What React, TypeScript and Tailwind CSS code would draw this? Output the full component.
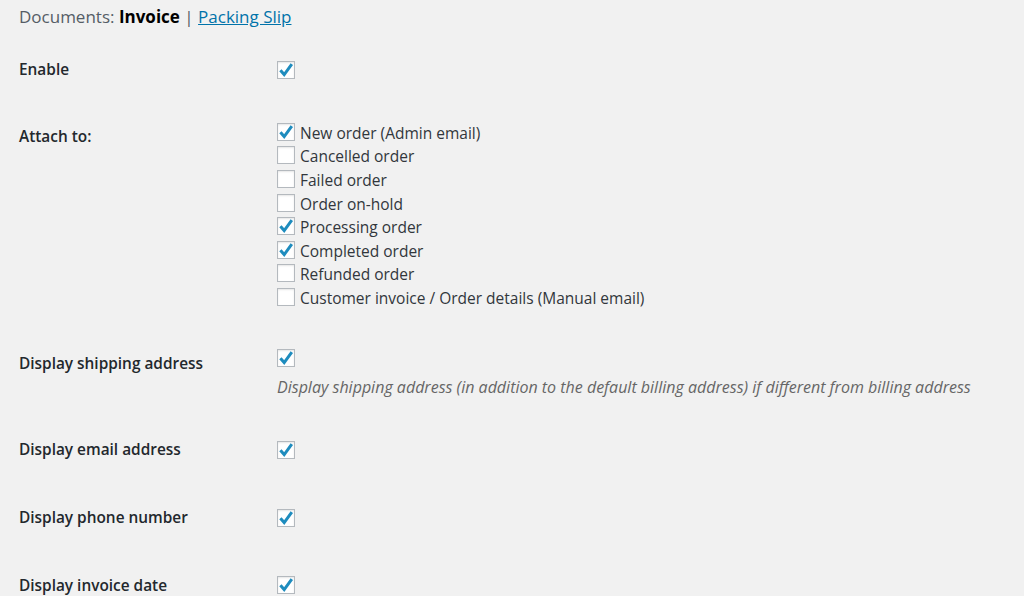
import React from "react";

const Check = ({ checked }: { checked: boolean }) => (
  <span className="relative block w-[18px] h-[18px] bg-white border border-[#b4b9be] shadow-[inset_0_1px_2px_rgba(0,0,0,0.1)] shrink-0">
    {checked && (
      <svg className="absolute left-[-1px] top-[-1px]" width="18" height="18" viewBox="0 0 18 18">
        <path d="M3.4 9.2 L7.2 13.6 L14.8 3.2" fill="none" stroke="#1e8cbe" strokeWidth="3" strokeLinecap="butt" strokeLinejoin="miter" />
      </svg>
    )}
  </span>
);

const items: [string, boolean][] = [
  ["New order (Admin email)", true],
  ["Cancelled order", false],
  ["Failed order", false],
  ["Order on-hold", false],
  ["Processing order", true],
  ["Completed order", true],
  ["Refunded order", false],
  ["Customer invoice / Order details (Manual email)", false],
];

const Label = ({ children, pt }: { children: React.ReactNode; pt: string }) => (
  <div className={`w-[258px] shrink-0 font-semibold text-[#23282d] leading-[24px] ${pt}`}>{children}</div>
);

export default function App() {
  return (
    <div
      className="w-[1024px] h-[596px] overflow-hidden bg-[#f1f1f1] pl-[19px] text-[15.4px] text-[#444]"
      style={{ fontFamily: '"Open Sans", "Noto Sans", sans-serif' }}
    >
      <div className="h-[48px] pt-[5px] leading-[24px] text-[17px] text-[#555d66]">
        Documents: <span className="font-bold text-[#000]">Invoice</span> |{" "}
        <a className="text-[#0073aa] underline">Packing Slip</a>
      </div>

      <div className="flex h-[52px]">
        <Label pt="pt-[10px]">Enable</Label>
        <div className="pt-[13px]">
          <Check checked />
        </div>
      </div>

      <div className="flex h-[230px]">
        <Label pt="pt-[25px]">Attach to:</Label>
        <div className="pt-[20px]">
          {items.map(([t, c]) => (
            <div key={t} className="h-[23.6px] flex items-center gap-[5px]">
              <Check checked={c} />
              <span className="leading-[20px] pt-[2px] text-[15.5px] text-[#32373c]">{t}</span>
            </div>
          ))}
        </div>
      </div>

      <div className="flex h-[90px]">
        <Label pt="pt-[22px]">Display shipping address</Label>
        <div className="pt-[19px]">
          <Check checked />
          <p className="mt-[8px] leading-[24px] text-[16px] italic text-[#666]">
            Display shipping address (in addition to the default billing address) if different from billing address
          </p>
        </div>
      </div>

      <div className="flex h-[68px]">
        <Label pt="pt-[18px]">Display email address</Label>
        <div className="pt-[21px]">
          <Check checked />
        </div>
      </div>

      <div className="flex h-[68px]">
        <Label pt="pt-[18px]">Display phone number</Label>
        <div className="pt-[21px]">
          <Check checked />
        </div>
      </div>

      <div className="flex h-[40px]">
        <Label pt="pt-[18px]">Display invoice date</Label>
        <div className="pt-[20px]">
          <Check checked />
        </div>
      </div>
    </div>
  );
}
